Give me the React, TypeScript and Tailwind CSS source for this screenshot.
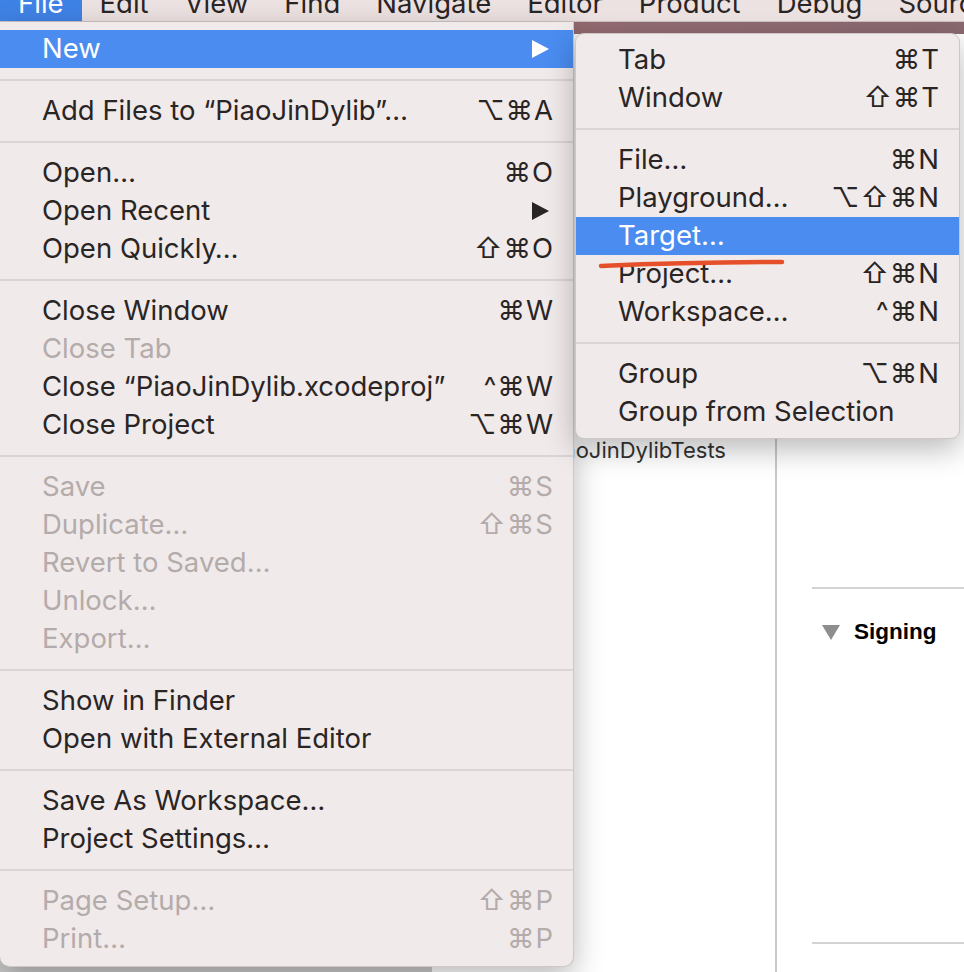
import React from 'react';

type Item = {
  label?: string;
  keys?: string;
  disabled?: boolean;
  active?: boolean;
  arrow?: boolean;
  sep?: boolean;
};

const MENU_BAR = ['File', 'Edit', 'View', 'Find', 'Navigate', 'Editor', 'Product', 'Debug', 'Source Control'];

const FILE_MENU: Item[] = [
  { label: 'New', arrow: true, active: true },
  { sep: true },
  { label: 'Add Files to “PiaoJinDylib”…', keys: '⌥⌘A' },
  { sep: true },
  { label: 'Open…', keys: '⌘O' },
  { label: 'Open Recent', arrow: true },
  { label: 'Open Quickly…', keys: '⇧⌘O' },
  { sep: true },
  { label: 'Close Window', keys: '⌘W' },
  { label: 'Close Tab', disabled: true },
  { label: 'Close “PiaoJinDylib.xcodeproj”', keys: '^⌘W' },
  { label: 'Close Project', keys: '⌥⌘W' },
  { sep: true },
  { label: 'Save', keys: '⌘S', disabled: true },
  { label: 'Duplicate…', keys: '⇧⌘S', disabled: true },
  { label: 'Revert to Saved…', disabled: true },
  { label: 'Unlock…', disabled: true },
  { label: 'Export…', disabled: true },
  { sep: true },
  { label: 'Show in Finder' },
  { label: 'Open with External Editor' },
  { sep: true },
  { label: 'Save As Workspace…' },
  { label: 'Project Settings…' },
  { sep: true },
  { label: 'Page Setup…', keys: '⇧⌘P', disabled: true },
  { label: 'Print…', keys: '⌘P', disabled: true },
];

const NEW_MENU: Item[] = [
  { label: 'Tab', keys: '⌘T' },
  { label: 'Window', keys: '⇧⌘T' },
  { sep: true },
  { label: 'File…', keys: '⌘N' },
  { label: 'Playground…', keys: '⌥⇧⌘N' },
  { label: 'Target…', active: true },
  { label: 'Project…', keys: '⇧⌘N' },
  { label: 'Workspace…', keys: '^⌘N' },
  { sep: true },
  { label: 'Group', keys: '⌥⌘N' },
  { label: 'Group from Selection' },
];

function Arrow({ white }: { white?: boolean }) {
  return (
    <svg width="17" height="18" viewBox="0 0 17 18" className="mr-[5px]">
      <polygon points="0,0 17,9 0,18" fill={white ? '#ffffff' : '#2a2525'} />
    </svg>
  );
}

function Row({ item }: { item: Item }) {
  if (item.sep) return <div className="my-[11px] h-[2px] bg-[#ddd5d5]" />;
  const tone = item.active
    ? 'bg-[#4a8cf0] text-white'
    : item.disabled
      ? 'text-[#b4abab]'
      : 'text-[#2a2525]';
  return (
    <div className={`flex h-[38px] items-center justify-between pl-[42px] pr-[19px] ${tone}`}>
      <span className="whitespace-nowrap">{item.label}</span>
      {item.keys && <span className="tracking-[1px]">{item.keys}</span>}
      {item.arrow && <Arrow white={item.active} />}
    </div>
  );
}

export default function App() {
  return (
    <div className="relative h-[972px] w-[964px] overflow-hidden bg-white font-['Inter','DejaVu_Sans',sans-serif]">
      {/* menu bar, only its lower half is on screen */}
      <div className="h-[22px] overflow-hidden border-b border-[#cdc2c2] bg-[#ede2e2]">
        <div className="-mt-[19px] flex h-[44px] text-[27.5px] leading-[44px] text-[#2a2525]">
          {MENU_BAR.map((m, i) => (
            <span key={m} className={`whitespace-nowrap px-[18px] ${i === 0 ? 'bg-[#3f82e6] text-white' : ''}`}>
              {m}
            </span>
          ))}
        </div>
      </div>

      {/* desktop showing between bar and window */}
      <div className="h-[12px] bg-gradient-to-r from-[#a37074] to-[#8a6970]" />

      {/* xcode window behind the menus */}
      <div className="flex h-[938px]">
        <div className="w-[432px] bg-[#cbcbcb]" />
        <div className="flex w-[345px] justify-end border-r-2 border-[#c9c9c9] bg-white pr-[49px] pt-[403px]">
          <span className="whitespace-nowrap text-[22px] leading-[26px] text-[#333333]">PiaoJinDylibTests</span>
        </div>
        <div className="flex flex-1 flex-col bg-white pl-[35px] pt-[553px]">
          <div className="h-[2px] bg-[#d3d3d3]" />
          <div className="mt-[30px] flex h-[26px] items-center gap-[14px] pl-[10px]">
            <svg width="18" height="15" viewBox="0 0 18 15">
              <polygon points="0,0 18,0 9,15" fill="#8e8e8e" />
            </svg>
            <span className="font-['Liberation_Sans',sans-serif] text-[22.5px] font-bold text-black">Signing</span>
          </div>
          <div className="mt-[297px] h-[2px] bg-[#d3d3d3]" />
        </div>
      </div>

      {/* File menu */}
      <div className="absolute left-0 top-[22px] w-[574px] rounded-b-[10px] border-r border-b border-[#cfc6c6] bg-[#f1eaea] py-[8px] text-[27.5px] shadow-[0_10px_30px_rgba(0,0,0,0.28)]">
        {FILE_MENU.map((it, i) => (
          <Row key={i} item={it} />
        ))}
      </div>

      {/* New submenu */}
      <div className="absolute left-[575px] top-[33px] w-[385px] rounded-[9px] border border-[#cfc6c6] bg-[#f1eaea] py-[7px] text-[27.5px] shadow-[0_10px_30px_rgba(0,0,0,0.28)]">
        {NEW_MENU.map((it, i) => (
          <Row key={i} item={it} />
        ))}
      </div>

      {/* red pen mark under Target… */}
      <svg className="absolute left-[595px] top-[252px]" width="195" height="22" viewBox="0 0 195 22">
        <path d="M6 14 Q 95 10 187 10" stroke="#e5502b" strokeWidth="4.5" strokeLinecap="round" fill="none" />
      </svg>
    </div>
  );
}
